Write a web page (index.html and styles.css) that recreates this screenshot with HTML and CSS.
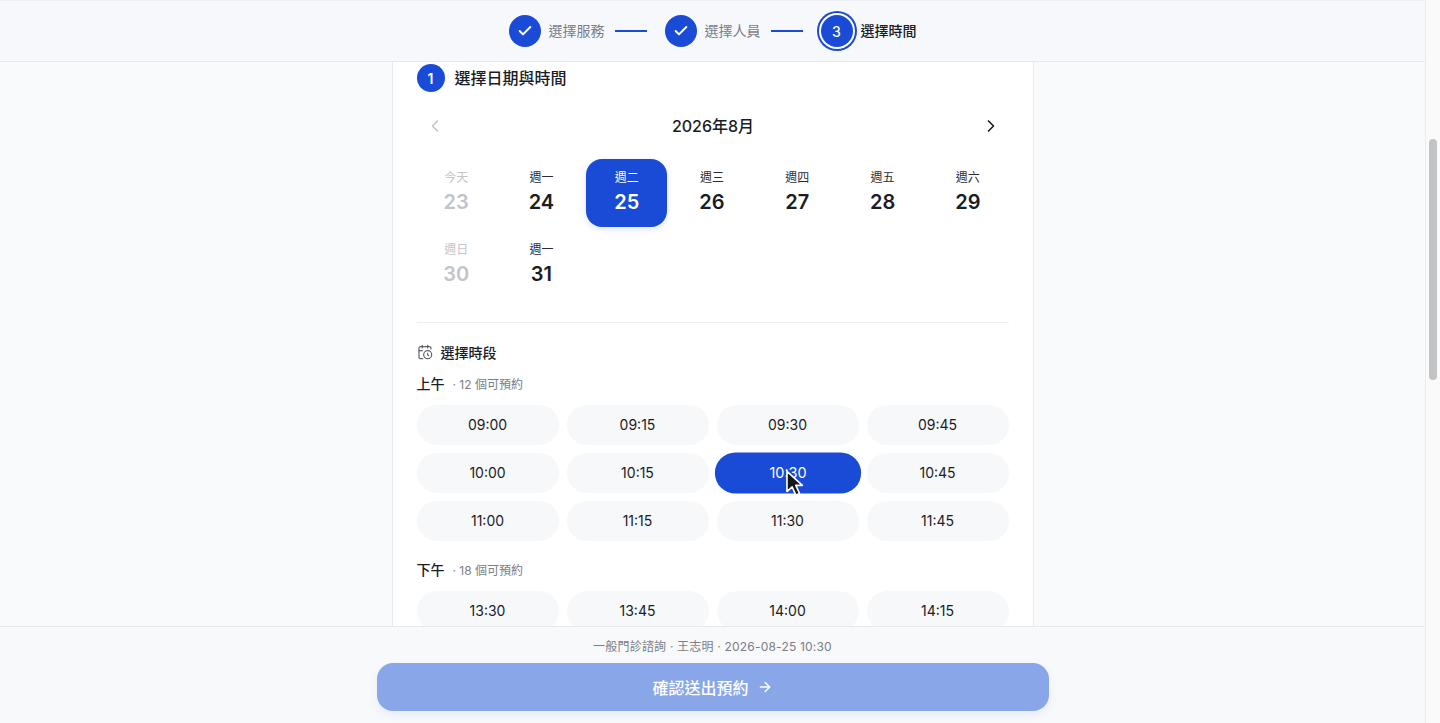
FILE: index.html
```html
<!DOCTYPE html>
<html lang="zh-Hant">
<head>
    <meta charset="UTF-8">
    <meta name="viewport" content="width=device-width, initial-scale=1.0">
    <title>選擇時間</title>
    <link rel="stylesheet" href="styles.css">
</head>
<body>

<div class="page">
    <header class="top-bar">
        <div class="stepper">
            <div class="step-circle">
                <svg width="16" height="16" viewBox="0 0 24 24" fill="none" stroke="white" stroke-width="3" stroke-linecap="round" stroke-linejoin="round"><path d="M20 6 9 17l-5-5"/></svg>
            </div>
            <span class="step-label">選擇服務</span>
            <span class="step-line"></span>
            <div class="step-circle">
                <svg width="16" height="16" viewBox="0 0 24 24" fill="none" stroke="white" stroke-width="3" stroke-linecap="round" stroke-linejoin="round"><path d="M20 6 9 17l-5-5"/></svg>
            </div>
            <span class="step-label">選擇人員</span>
            <span class="step-line"></span>
            <div class="step-circle step-current">3</div>
            <span class="step-label step-label-current">選擇時間</span>
        </div>
    </header>

    <main class="scroll-area">
        <section class="card">
            <div class="section-head">
                <span class="section-num">1</span>
                <h2>選擇日期與時間</h2>
            </div>

            <div class="month-nav">
                <svg class="month-arrow" width="20" height="20" viewBox="0 0 24 24" fill="none" stroke="#c4c6cc" stroke-width="2" stroke-linecap="round" stroke-linejoin="round"><path d="m15 18-6-6 6-6"/></svg>
                <span class="month-title">2026年8月</span>
                <svg class="month-arrow" width="20" height="20" viewBox="0 0 24 24" fill="none" stroke="#1a1c26" stroke-width="2" stroke-linecap="round" stroke-linejoin="round"><path d="m9 18 6-6-6-6"/></svg>
            </div>

            <div class="date-grid">
                <div class="date-cell disabled"><span class="date-week">今天</span><span class="date-num">23</span></div>
                <div class="date-cell"><span class="date-week">週一</span><span class="date-num">24</span></div>
                <div class="date-cell selected"><span class="date-week">週二</span><span class="date-num">25</span></div>
                <div class="date-cell"><span class="date-week">週三</span><span class="date-num">26</span></div>
                <div class="date-cell"><span class="date-week">週四</span><span class="date-num">27</span></div>
                <div class="date-cell"><span class="date-week">週五</span><span class="date-num">28</span></div>
                <div class="date-cell"><span class="date-week">週六</span><span class="date-num">29</span></div>
                <div class="date-cell disabled"><span class="date-week">週日</span><span class="date-num">30</span></div>
                <div class="date-cell"><span class="date-week">週一</span><span class="date-num">31</span></div>
            </div>

            <div class="divider"></div>

            <div class="slots-head">
                <svg width="16" height="16" viewBox="0 0 24 24" fill="none" stroke="#5f6370" stroke-width="1.8" stroke-linecap="round" stroke-linejoin="round"><path d="M21 7.5V6a2 2 0 0 0-2-2H5a2 2 0 0 0-2 2v14a2 2 0 0 0 2 2h3.5"/><path d="M16 2v4"/><path d="M8 2v4"/><path d="M3 10h5"/><path d="M17.5 17.5 16 16.3V14"/><circle cx="16" cy="16" r="6"/></svg>
                <span>選擇時段</span>
            </div>

            <div class="period"><strong>上午</strong><span>· 12 個可預約</span></div>
            <div class="slot-grid">
                <div class="slot">09:00</div>
                <div class="slot">09:15</div>
                <div class="slot">09:30</div>
                <div class="slot">09:45</div>
                <div class="slot">10:00</div>
                <div class="slot">10:15</div>
                <div class="slot slot-selected">10:30
                    <svg class="cursor" width="20" height="27" viewBox="0 0 20 27"><path d="M2 1.5V21l5-4.6 3.6 8.1 3.6-1.6-3.6-7.9H17Z" fill="#14161c" stroke="white" stroke-width="1.6" stroke-linejoin="round"/></svg>
                </div>
                <div class="slot">10:45</div>
                <div class="slot">11:00</div>
                <div class="slot">11:15</div>
                <div class="slot">11:30</div>
                <div class="slot">11:45</div>
            </div>

            <div class="period period-pm"><strong>下午</strong><span>· 18 個可預約</span></div>
            <div class="slot-grid">
                <div class="slot">13:30</div>
                <div class="slot">13:45</div>
                <div class="slot">14:00</div>
                <div class="slot">14:15</div>
            </div>
        </section>
    </main>

    <footer class="bottom-bar">
        <p class="summary">一般門診諮詢 · 王志明 · 2026-08-25 10:30</p>
        <button class="submit-btn">
            確認送出預約
            <svg width="16" height="16" viewBox="0 0 24 24" fill="none" stroke="white" stroke-width="2" stroke-linecap="round" stroke-linejoin="round"><path d="M5 12h14"/><path d="m12 5 7 7-7 7"/></svg>
        </button>
    </footer>
</div>

<div class="scrollbar">
    <div class="scroll-thumb"></div>
</div>

</body>
</html>
```

FILE: styles.css
```css
* {
    box-sizing: border-box;
}

html, body {
    height: 100%;
}

body {
    margin: 0;
    display: flex;
    height: 723px;
    overflow: hidden;
    background-color: #f9fafc;
    color: #1a1c26;
    font-family: Inter, "Noto Sans CJK TC", sans-serif;
}

.page {
    flex: 1;
    min-width: 0;
    display: flex;
    flex-direction: column;
}

.top-bar {
    height: 62px;
    flex-shrink: 0;
    display: flex;
    justify-content: center;
    align-items: center;
    background-color: #f7f8fb;
    border-top: 1px solid #eff0f3;
    border-bottom: 1px solid #e8e9ed;
}

.stepper {
    display: flex;
    align-items: center;
}

.step-circle {
    width: 32px;
    height: 32px;
    border-radius: 50%;
    display: flex;
    align-items: center;
    justify-content: center;
    background-color: #1a4bd6;
    color: white;
    font-size: 14px;
    font-weight: 500;
}

.step-current {
    box-shadow: 0 0 0 2px white, 0 0 0 4px #1a4bd6;
}

.step-label {
    margin-left: 8px;
    font-size: 14px;
    line-height: 20px;
    color: #7a7d88;
}

.step-label-current {
    color: #1a1c26;
    font-weight: 500;
}

.step-line {
    width: 32px;
    height: 2px;
    margin: 0 18px 0 10px;
    background-color: #1a4bd6;
}

.scroll-area {
    flex: 1;
    min-height: 0;
    overflow: hidden;
}

.card {
    width: 642px;
    margin: 0 auto;
    padding: 2px 24px 24px;
    background-color: white;
    border-left: 1px solid #e8e9ed;
    border-right: 1px solid #e8e9ed;
}

.section-head {
    display: flex;
    align-items: center;
    gap: 10px;
}

.section-head h2 {
    margin: -2px 0 0;
    font-size: 16px;
    font-weight: 500;
}

.section-num {
    width: 28px;
    height: 28px;
    border-radius: 50%;
    display: flex;
    align-items: center;
    justify-content: center;
    background-color: #1a4bd6;
    color: white;
    font-size: 14px;
    font-weight: 600;
}

.month-nav {
    display: flex;
    justify-content: space-between;
    align-items: center;
    height: 36px;
    margin-top: 16px;
    padding: 0 7px 0 8px;
}

.month-title {
    margin-top: -2px;
    font-size: 16px;
    font-weight: 500;
}

.date-grid {
    display: grid;
    grid-template-columns: repeat(7, 1fr);
    gap: 4px;
    margin: 15px 0 0 -1px;
}

.date-cell {
    height: 68px;
    border-radius: 16px;
    display: flex;
    flex-direction: column;
    align-items: center;
    justify-content: center;
    gap: 2px;
}

.date-week {
    font-size: 12px;
    line-height: 16px;
    color: #2a2c36;
}

.date-num {
    font-size: 20px;
    line-height: 28px;
    font-weight: 600;
}

.date-cell.disabled .date-week,
.date-cell.disabled .date-num {
    color: #c2c4ca;
}

.date-cell.selected {
    background-color: #1a4bd6;
    box-shadow: 0 2px 6px rgba(26, 75, 214, 0.15);
}

.date-cell.selected .date-week,
.date-cell.selected .date-num {
    color: white;
}

.divider {
    height: 1px;
    margin-top: 23px;
    background-color: #eeeff2;
}

.slots-head {
    display: flex;
    align-items: center;
    gap: 8px;
    margin-top: 19px;
    height: 20px;
    font-size: 14px;
    font-weight: 500;
}

.period {
    display: flex;
    align-items: center;
    gap: 8px;
    height: 20px;
    margin-top: 11px;
}

.period strong {
    font-size: 14px;
    font-weight: 500;
}

.period span {
    font-size: 12px;
    color: #7a7d88;
}

.period-pm {
    margin-top: 18px;
}

.slot-grid {
    display: grid;
    grid-template-columns: repeat(4, 1fr);
    gap: 8px;
    margin-top: 12px;
}

.slot {
    position: relative;
    height: 40px;
    padding-bottom: 1px;
    border-radius: 20px;
    display: flex;
    align-items: center;
    justify-content: center;
    background-color: #f7f8fa;
    font-size: 14px;
}

.slot-selected {
    background-color: #1a4bd6;
    color: white;
    transform: scale(1.03);
}

.cursor {
    position: absolute;
    left: 68px;
    top: 17px;
}

.bottom-bar {
    height: 97px;
    flex-shrink: 0;
    display: flex;
    flex-direction: column;
    align-items: center;
    background-color: #f8f9fb;
    border-top: 1px solid #e8e9ed;
}

.summary {
    margin: 11px 0 0;
    height: 18px;
    font-size: 12px;
    line-height: 18px;
    letter-spacing: 0.2px;
    color: #7a7d88;
}

.submit-btn {
    width: 672px;
    height: 48px;
    margin-top: 7px;
    border: none;
    border-radius: 16px;
    display: flex;
    align-items: center;
    justify-content: center;
    gap: 8px;
    background-color: #88a6e8;
    color: white;
    font-family: inherit;
    font-size: 16px;
    font-weight: 500;
    box-shadow: 0 4px 10px rgba(26, 75, 214, 0.08);
}

.scrollbar {
    width: 15px;
    flex-shrink: 0;
    background-color: #fafafa;
    border-left: 1px solid #ececec;
    padding: 139px 3px 0;
}

.scroll-thumb {
    height: 241px;
    border-radius: 4px;
    background-color: #c2c3c5;
}
```
